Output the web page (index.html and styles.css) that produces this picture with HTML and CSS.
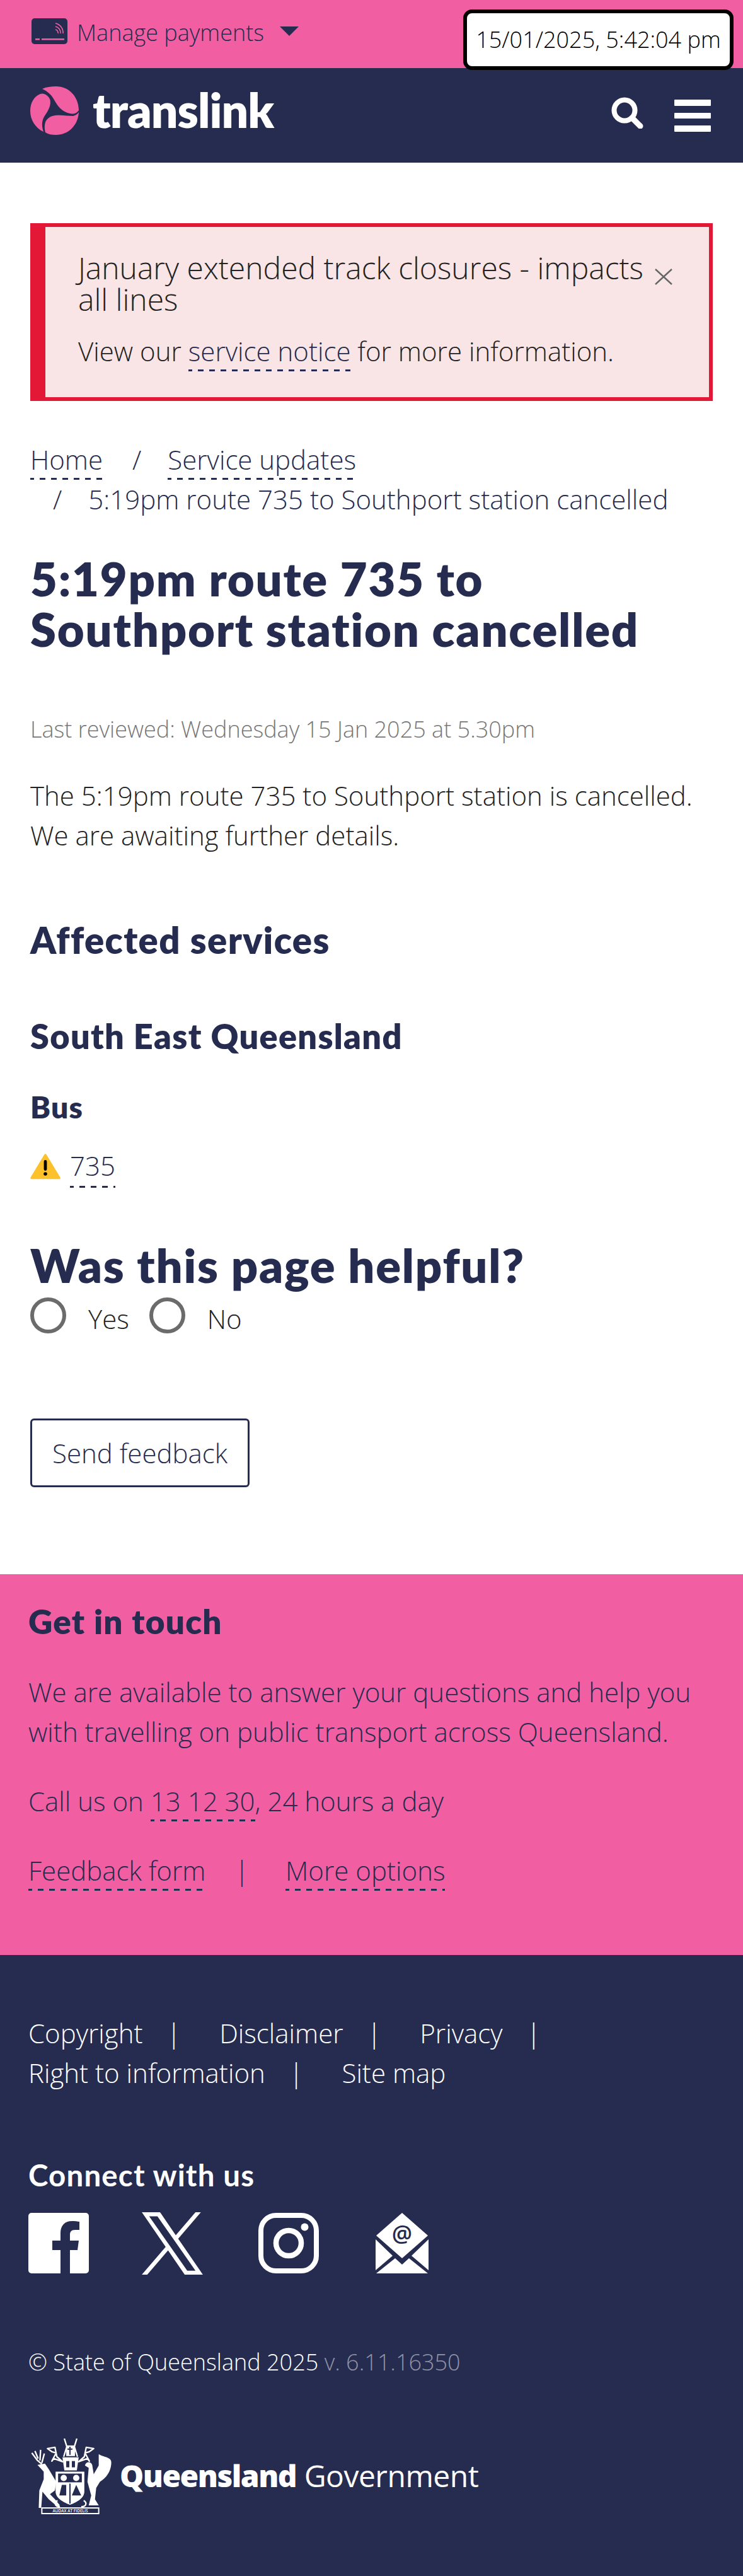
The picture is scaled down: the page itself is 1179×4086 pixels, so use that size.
FILE: index.html
```html
<!DOCTYPE html>
<html lang="en">
<head>
  <meta charset="UTF-8" />
  <meta name="viewport" content="width=device-width, initial-scale=1" />
  <title>5:19pm route 735 to Southport station cancelled - Translink</title>
  <link rel="stylesheet" href="styles.css">
</head>
<body>
<div class="topbar">
  <a class="manage" href="#">
    <svg class="card-icon" viewBox="0 0 57 41">
      <rect width="57" height="41" rx="5" fill="#262c4f"/>
      <rect x="6" y="32" width="7" height="2.5" fill="#f15fa2"/>
      <rect x="16" y="32" width="36" height="2.5" fill="#f15fa2"/>
      <g fill="none" stroke="#f15fa2" stroke-width="1.6">
        <path d="M38 18a5 5 0 0 1 4 6"/>
        <path d="M38 13a10 10 0 0 1 8 11"/>
        <path d="M38 8a15 15 0 0 1 12 16"/>
      </g>
    </svg>
    <span>Manage payments</span>
    <span class="caret"></span>
  </a>
  <div class="clock">15/01/2025, 5:42:04 pm</div>
</div>
<header class="site-header">
  <a class="brand" href="#">
    <svg class="brand-mark" viewBox="0 0 77 77">
      <g fill="#f15fa2">
        <path d="M19 4C25 1 33 0 41 0C62 0 77 17 77 38C74 42 70 44 66 43.500C58 43 50 38 45 32C40 26 37 18 32 13C28 9 24 6 19 4Z"/>
        <path d="M77 41C76 62 60 77 41 77C34 77 29 76 24 73C23 69 22 63 24 57C26 51 32 47 40 46C50 45 60 47 68 47C72 46 75 44 77 41Z"/>
        <path d="M21 72C8 66 0 53 0 39C0 26 6 16 16 12C22 10 28 14 31 20C34 28 29 38 24 45C19 52 17 60 21 72Z"/>
      </g>
    </svg>
    <span class="brand-name">translink</span>
  </a>
  <div class="header-tools">
    <svg class="search-icon" viewBox="0 0 51 50">
      <circle cx="21" cy="21" r="16.5" fill="none" stroke="#fff" stroke-width="8"/>
      <path d="M33 33L46 46" stroke="#fff" stroke-width="9" stroke-linecap="round"/>
    </svg>
    <div class="burger"><span></span><span></span><span></span></div>
  </div>
</header>
<main>
  <section class="alert">
    <div class="alert-title">
      <h2>January extended track closures - impacts all lines</h2>
      <svg class="alert-close" viewBox="0 0 28 26"><path d="M1 1L27 25M27 1L1 25" stroke="#666" stroke-width="2.4" fill="none"/></svg>
    </div>
    <p>View our <a href="#">service notice</a> for more information.</p>
  </section>
  <ol class="crumbs">
    <li><a href="#">Home</a></li>
    <li><a href="#">Service updates</a></li>
    <li>5:19pm route 735 to Southport station cancelled</li>
  </ol>
  <h1>5:19pm route 735 to Southport station cancelled</h1>
  <p class="reviewed">Last reviewed: Wednesday 15 Jan 2025 at 5.30pm</p>
  <p class="lead">The 5:19pm route 735 to Southport station is cancelled. We are awaiting further details.</p>
  <h2 class="affected">Affected services</h2>
  <h3 class="region">South East Queensland</h3>
  <h4 class="mode">Bus</h4>
  <div class="route">
    <svg class="warn" viewBox="0 0 48 41">
      <path d="M24 2L46 38.5H2Z" fill="#fdc12c" stroke="#fdc12c" stroke-width="3.5" stroke-linejoin="round"/>
      <rect x="21.6" y="10" width="4.8" height="17" rx="2.4"/>
      <circle cx="24" cy="32" r="2.8"/>
    </svg>
    <a href="#">735</a>
  </div>
  <h2 class="helpful">Was this page helpful?</h2>
  <form class="feedback">
    <div class="radios">
      <label><input type="radio" name="helpful"><span>Yes</span></label>
      <label><input type="radio" name="helpful"><span>No</span></label>
    </div>
    <button type="button">Send feedback</button>
  </form>
</main>
<section class="contact">
  <h3>Get in touch</h3>
  <p>We are available to answer your questions and help you with travelling on public transport across Queensland.</p>
  <p>Call us on <a href="#">13 12 30</a>, 24 hours a day</p>
  <p class="contact-links"><a href="#">Feedback form</a><span>|</span><a href="#">More options</a></p>
</section>
<footer>
  <ul class="foot-links">
    <li><a href="#">Copyright</a></li>
    <li><a href="#">Disclaimer</a></li>
    <li><a href="#">Privacy</a></li>
    <li><a href="#">Right to information</a></li>
    <li><a href="#">Site map</a></li>
  </ul>
  <h3>Connect with us</h3>
  <div class="socials">
    <svg class="fb" viewBox="0 0 96 96">
      <path fill="#fff" d="M5 0H91A5 5 0 0 1 96 5V91A5 5 0 0 1 91 96H66V59H78L80 44H66V35C66 30 68 27 74 27H81V14C78 13.500 74 13 69 13C58 13 51 20 51 32V44H38V59H51V96H5A5 5 0 0 1 0 91V5A5 5 0 0 1 5 0Z"/>
    </svg>
    <svg class="tw" viewBox="0 0 1200 1227">
      <path fill="#fff" d="M714.163 519.284L1160.89 0H1055.03L667.137 450.887L357.328 0H0L468.492 681.821L0 1226.37H105.866L515.491 750.218L842.672 1226.37H1200L714.137 519.284H714.163ZM569.165 687.828L521.697 619.934L144.011 79.6944H306.615L611.412 515.685L658.88 583.579L1055.08 1150.3H892.476L569.165 687.854V687.828Z"/>
    </svg>
    <svg class="ig" viewBox="0 0 96 96">
      <rect x="4" y="4" width="88" height="88" rx="24" fill="none" stroke="#fff" stroke-width="8"/>
      <circle cx="48" cy="48" r="20" fill="none" stroke="#fff" stroke-width="8.500"/>
      <circle cx="73.500" cy="22.500" r="6" fill="#fff"/>
    </svg>
    <svg class="mail" viewBox="0 0 84 96">
      <path fill="#fff" d="M42 0L83 36L42 72L1 36Z"/>
      <path fill="#fff" d="M0 42L27 68L0 91ZM84 42L57 68L84 91ZM31 72L42 82L53 72L83 96H1Z"/>
      <text class="mail-at" x="42" y="46" text-anchor="middle">@</text>
    </svg>
  </div>
  <p class="legal">© State of Queensland 2025 <span>v. 6.11.16350</span></p>
  <div class="qld">
    <svg class="crest" viewBox="0 0 130 122">
      <g fill="none" stroke="#fff" stroke-width="2.4" stroke-linejoin="round">
        <path d="M53 1L57 14L52 30M73 1L69 14L74 30"/>
        <path d="M26 17L38 15L41 30L50 38L36 33L33 37L40 24L33 22Z"/>
        <path d="M100 17L88 15L85 30L76 38L90 33L93 37L86 24L93 22Z"/>
        <path d="M1 24L10 36L17 42M6 21L11 33M15 19L14 36M21 25L17 40"/>
        <path d="M42 100C36 104 38 110 46 110M84 100C90 104 88 110 80 110"/>
      </g>
      <g fill="#fff">
        <rect x="56" y="12" width="14" height="17"/>
        <path d="M50 31H76L73 52H53Z"/>
        <path d="M10 43L22 41L28 50L34 60L40 70L38 84L30 90L38 98L46 108L42 110L28 98L18 86L16 112H12L13 84L20 66L20 54Z"/>
        <path d="M108 26C118 32 130 30 128 42C127 54 120 64 110 70L104 80L102 98L108 108H92L96 92L90 70L92 48L86 44C88 36 98 38 98 46L100 58L108 44Z"/>
        <path d="M39 54H85V86C85 96 73 103 62 107C51 103 39 96 39 86Z"/>
      </g>
      <g fill="#262c4f">
        <path d="M62 14V27M58 18H66" stroke="#262c4f" stroke-width="2"/>
        <rect x="56" y="37" width="5" height="10"/>
        <rect x="65" y="37" width="5" height="10"/>
        <rect x="43" y="57" width="38" height="14"/>
        <rect x="61" y="73" width="2" height="32"/>
        <path d="M49 75H56V92H45Z"/>
        <path d="M72 75L80 92H65Z"/>
      </g>
      <g fill="#fff">
        <circle cx="52" cy="64" r="5"/>
        <circle cx="72" cy="64" r="5"/>
      </g>
      <rect x="17" y="112" width="91" height="9" fill="none" stroke="#fff" stroke-width="2"/>
      <text class="motto" x="62.500" y="119" text-anchor="middle">AUDAX AT FIDELIS</text>
    </svg>
    <div class="qld-name"><b>Queensland</b> <span>Government</span></div>
  </div>
</footer>
</body>
</html>
```

FILE: styles.css
```css
* {
  box-sizing: border-box;
}
body {
  margin: 0;
  min-height: 100vh;
  display: flex;
  flex-direction: column;
  font-family: 'Open Sans', sans-serif;
  font-weight: 300;
  font-size: 42px;
  line-height: 63px;
  color: #222;
  background: white;
}
a {
  color: #262c4f;
  text-decoration: none;
}
h1, h2, h3, h4, p, ol, ul {
  margin: 0;
  padding: 0;
}
h1, h3, h4, .helpful, .affected {
  font-family: 'Lato', sans-serif;
  font-weight: 800;
  color: #262c4f;
  letter-spacing: 0.024em;
}

.topbar {
  height: 108px;
  background: #f15fa2;
  display: flex;
  justify-content: space-between;
  padding: 15px 15px 0 50px;
}
.manage {
  display: flex;
  align-items: flex-start;
  font-size: 36px;
  line-height: 52px;
  gap: 15px;
}
.card-icon {
  width: 57px;
  height: 41px;
  margin-top: 14px;
}
.manage span:nth-child(2) {
  margin-top: 11px;
}
.caret {
  width: 0;
  height: 0;
  margin: 27px 0 0 10px;
  border-left: 15px solid transparent;
  border-right: 15px solid transparent;
  border-top: 15px solid #262c4f;
}
.clock {
  width: 429px;
  height: 96px;
  position: relative;
  z-index: 2;
  background: white;
  border: 6px solid #000;
  border-radius: 14px;
  font-size: 36px;
  color: #000;
  line-height: 84px;
  text-align: center;
  white-space: nowrap;
}

.site-header {
  height: 150px;
  background: #262c4f;
  display: flex;
  justify-content: space-between;
  padding: 29px 51px 0 48px;
}
.brand {
  display: flex;
  gap: 22px;
  height: 77px;
}
.brand-mark {
  width: 77px;
  height: 77px;
}
.brand-name {
  font-family: 'Lato', sans-serif;
  font-weight: 800;
  font-size: 75px;
  letter-spacing: -1px;
  line-height: 74px;
  color: white;
}
.header-tools {
  display: flex;
  gap: 49px;
  padding-top: 17px;
}
.search-icon {
  width: 51px;
  height: 50px;
}
.burger {
  width: 58px;
  display: flex;
  flex-direction: column;
  gap: 11px;
  padding-top: 4px;
}
.burger span {
  display: block;
  height: 9.500px;
  background: white;
  border-radius: 1px;
}

main {
  padding: 96px 48px 0;
}
main a, .contact a {
  padding-bottom: 4px;
  background: linear-gradient(90deg, #262c4f 50%, transparent 50%) -3px 100% / 18px 3px repeat-x;
}
.alert {
  height: 282px;
  background: #f9e5e5;
  border: 6px solid #e31837;
  border-left-width: 24px;
  padding: 40px 58px 0 52px;
}
.alert-title {
  display: flex;
  gap: 18px;
  align-items: flex-start;
}
.alert-title h2 {
  font-weight: 300;
  font-size: 48px;
  line-height: 50.400px;
  color: #222;
  flex: 1;
}
.alert-close {
  width: 28px;
  height: 26px;
  margin-top: 26px;
}
.alert p {
  margin-top: 24px;
}
.crumbs {
  list-style: none;
  margin-top: 61px;
  color: #262c4f;
}
.crumbs li {
  display: inline-block;
  white-space: nowrap;
}
.crumbs li + li {
  padding-left: 36px;
}
.crumbs li + li::before {
  content: "/";
  margin-right: 42px;
}
h1 {
  font-size: 74px;
  line-height: 80px;
  margin-top: 55px;
  max-width: 1040px;
}
.reviewed {
  margin-top: 87px;
  font-size: 36px;
  color: #777;
}
.lead {
  margin-top: 42px;
}
.affected {
  font-size: 58px;
  line-height: 80px;
  margin-top: 95px;
}
.region {
  font-size: 54px;
  line-height: 70px;
  margin-top: 78px;
}
.mode {
  font-size: 48px;
  line-height: 60px;
  margin-top: 47px;
}
.route {
  display: flex;
  align-items: center;
  gap: 15px;
  margin-top: 33px;
  height: 63px;
}
.warn {
  width: 48px;
  height: 41px;
}
.helpful {
  font-size: 74px;
  line-height: 90px;
  margin-top: 80px;
}
.radios {
  display: flex;
  gap: 32px;
  height: 66px;
  margin-top: 6px;
}
.radios label {
  display: flex;
  gap: 35px;
}
.radios input {
  appearance: none;
  width: 57px;
  height: 57px;
  margin: 0;
  border: 6px solid #6b6b6b;
  border-radius: 50%;
  background: white;
}
.radios span {
  padding-top: 2px;
}
.feedback button {
  display: block;
  width: 348px;
  height: 109px;
  margin-top: 126px;
  padding: 0;
  background: white;
  border: 3px solid #262c4f;
  border-radius: 6px;
  color: #262c4f;
  font-family: inherit;
  font-weight: 300;
  font-size: 42px;
}

.contact {
  margin-top: 138px;
  height: 604px;
  background: #f15fa2;
  padding: 40px 45px 0;
  color: #262c4f;
}
.contact h3 {
  font-size: 53px;
  line-height: 70px;
}
.contact p {
  margin-top: 47px;
}
.contact h3 + p {
  margin-top: 45px;
}
.contact-links span {
  margin: 0 58px 0 46px;
}

footer {
  flex: 1;
  background: #262c4f;
  color: white;
  padding: 92px 45px 0;
}
footer a {
  color: white;
}
.foot-links {
  list-style: none;
}
.foot-links li {
  display: inline-block;
  margin-right: 4px;
}
.foot-links li:not(:last-child)::after {
  content: "|";
  margin: 0 46px 0 38px;
}
footer h3 {
  color: white;
  font-size: 47.500px;
  font-weight: 700;
  line-height: 60px;
  margin-top: 101px;
}
.socials {
  display: flex;
  align-items: center;
  gap: 84px;
  margin-top: 30px;
  height: 96px;
}
.fb {
  width: 96px;
  height: 96px;
}
.ig {
  width: 96px;
  height: 96px;
  margin-left: 4px;
}
.tw {
  width: 97px;
  height: 99px;
}
.mail {
  width: 84px;
  height: 96px;
  margin-left: 6px;
}
.mail-at {
  font-family: 'Open Sans', sans-serif;
  font-size: 36px;
  font-weight: 600;
  fill: #262c4f;
}
.legal {
  margin-top: 109px;
  font-size: 36px;
}
.legal span {
  color: #8f93a8;
}
.qld {
  display: flex;
  align-items: flex-start;
  gap: 11px;
  margin-top: 89px;
  padding-left: 4px;
}
.crest {
  width: 130px;
  height: 121px;
}
.motto {
  font-family: 'Open Sans', sans-serif;
  font-size: 6.500px;
  font-weight: 600;
  fill: #fff;
}
.qld-name {
  font-size: 48px;
  line-height: 60px;
  margin-top: 30px;
  white-space: nowrap;
}
.qld-name b {
  font-weight: 800;
  letter-spacing: -1.500px;
}
.qld-name span {
  font-weight: 400;
  letter-spacing: -0.5px;
}
```
